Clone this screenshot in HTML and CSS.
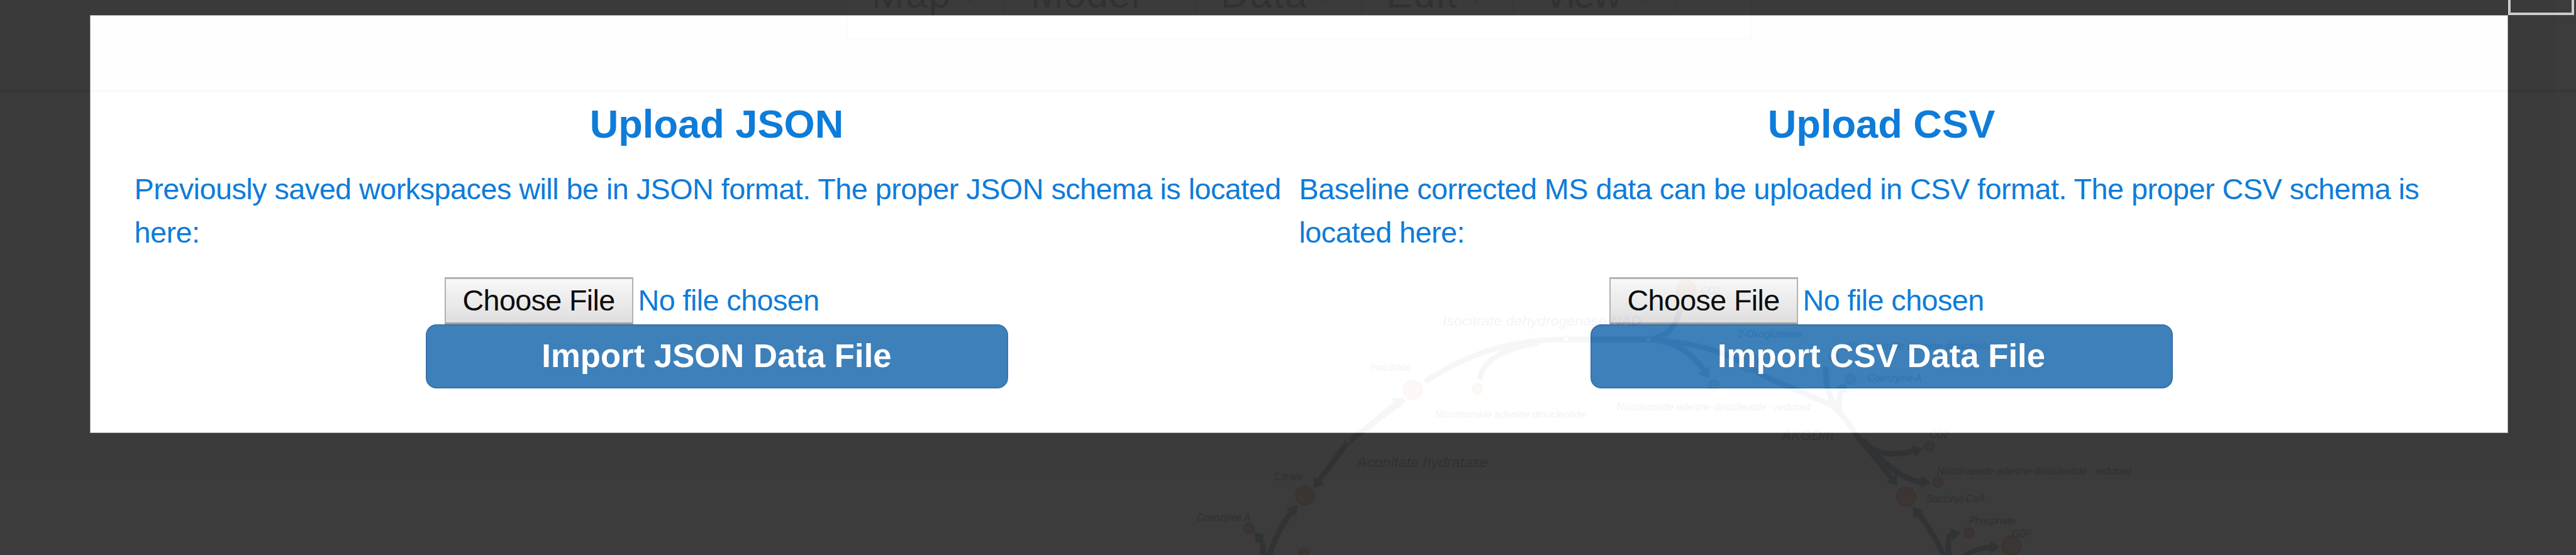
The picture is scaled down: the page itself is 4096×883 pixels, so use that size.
FILE: index.html
```html
<!DOCTYPE html>
<html lang="en">
<head>
<meta charset="utf-8">
<title>Upload</title>
<link rel="stylesheet" href="styles.css">
</head>
<body>
<svg class="map" viewBox="0 0 4664 1006" preserveAspectRatio="none">
  <defs>
    <marker id="arrow" markerUnits="userSpaceOnUse" markerWidth="18" markerHeight="24" refX="4" refY="12" orient="auto">
      <path class="head" d="M0 0L18 12L0 24Z"/>
    </marker>
  </defs>
  <rect class="navbar" x="0" y="0" width="4664" height="162"/>
  <rect class="rule" x="0" y="162" width="4664" height="5"/>
  <rect class="menu-box" x="1534" y="-20" width="1636" height="90"/>
  <path class="divider" d="M1820 0V27M2165 0V27M2465 0V27M2738 0V27M3037 0V27"/>
  <g class="menu">
    <text x="1578" y="14" textLength="143">Map</text>
    <text x="1866" y="14" textLength="198">Model</text>
    <text x="2210" y="14" textLength="156">Data</text>
    <text x="2510" y="14" textLength="128">Edit</text>
    <text x="2794" y="14" textLength="142">View</text>
    <path d="M1745-10h22l-11 13zM2089-10h22l-11 13zM2389-10h22l-11 13zM2661-10h22l-11 13zM2964-10h22l-11 13z"/>
  </g>
  <g class="edges">
    <path d="M2542 724L2468 781Q2444 796 2430 815L2386 874" marker-end="url(#arrow)"/>
    <path d="M2468 781L2530 730" marker-end="url(#arrow)"/>
    <path d="M2580 692C2650 645 2730 615 2835 615H2985C3080 622 3135 640 3190 680L3318 735Q3345 762 3360 787L3427 869" marker-end="url(#arrow)"/>
    <path d="M2679 688C2684 650 2730 630 2785 621"/>
    <path d="M2985 615C3020 612 3035 590 3042 560"/>
    <path d="M2990 615C3040 620 3070 648 3087 674" marker-end="url(#arrow)"/>
    <path d="M3306 665Q3303 705 3324 738"/>
    <path d="M3330 745Q3328 720 3336 705" marker-end="url(#arrow)"/>
    <path d="M3372 797Q3400 835 3468 817" marker-end="url(#arrow)"/>
    <path d="M3386 812Q3440 872 3482 874" marker-end="url(#arrow)"/>
    <path d="M3521 1010Q3500 965 3472 929" marker-end="url(#arrow)"/>
    <path d="M3529 1010C3526 980 3526 970 3537 968" marker-end="url(#arrow)"/>
    <path d="M3555 1010Q3575 993 3607 992" marker-end="url(#arrow)"/>
    <path d="M2297 1010Q2313 960 2340 926" marker-end="url(#arrow)"/>
    <path d="M2287 1010Q2289 985 2280 975" marker-end="url(#arrow)"/>
  </g>
  <g class="nodes">
    <circle cx="2558" cy="707" r="17"/><circle cx="2675" cy="705" r="9"/>
    <circle cx="3053" cy="525" r="17"/><circle cx="3167" cy="657" r="17"/>
    <circle cx="3103" cy="698" r="9"/><circle cx="3320" cy="647" r="9"/><circle cx="3351" cy="687" r="9"/>
    <circle cx="3493" cy="809" r="9"/><circle cx="3509" cy="874" r="9"/><circle cx="3451" cy="900" r="17"/>
    <circle cx="3565" cy="966" r="9"/><circle cx="3642" cy="989" r="17"/>
    <circle cx="2363" cy="898" r="17"/><circle cx="2261" cy="958" r="9"/><circle cx="2360" cy="1003" r="9"/>
    <circle class="mid" cx="2836" cy="615" r="5"/><circle class="mid" cx="2984" cy="615" r="5"/><circle class="mid" cx="2441" cy="799" r="5"/>
  </g>
  <g class="reactions">
    <text x="2612" y="590" textLength="360" lengthAdjust="spacingAndGlyphs">Isocitrate dehydrogenase NAD</text>
    <text x="2457" y="846" textLength="237" lengthAdjust="spacingAndGlyphs">Aconitate hydratase</text>
    <text x="3226" y="798" textLength="94" lengthAdjust="spacingAndGlyphs">AKGDm</text>
  </g>
  <g class="metabolites">
    <text x="2481" y="672" textLength="73" lengthAdjust="spacingAndGlyphs">Isocitrate</text>
    <text x="2598" y="758" textLength="272" lengthAdjust="spacingAndGlyphs">Nicotinamide adenine dinucleotide</text>
    <text x="2927" y="744" textLength="351" lengthAdjust="spacingAndGlyphs">Nicotinamide adenine dinucleotide - reduced</text>
    <text x="3080" y="533" textLength="34" lengthAdjust="spacingAndGlyphs">CO2</text>
    <text x="3146" y="612" textLength="117" lengthAdjust="spacingAndGlyphs">2-Oxoglutarate</text>
    <text x="3345" y="634" textLength="272" lengthAdjust="spacingAndGlyphs">Nicotinamide adenine dinucleotide</text>
    <text x="3382" y="692" textLength="97" lengthAdjust="spacingAndGlyphs">Coenzyme A</text>
    <text x="3494" y="794" textLength="34" lengthAdjust="spacingAndGlyphs">CO2</text>
    <text x="3507" y="860" textLength="351" lengthAdjust="spacingAndGlyphs">Nicotinamide adenine dinucleotide - reduced</text>
    <text x="3488" y="910" textLength="106" lengthAdjust="spacingAndGlyphs">Succinyl-CoA</text>
    <text x="3565" y="950" textLength="84" lengthAdjust="spacingAndGlyphs">Phosphate</text>
    <text x="3643" y="974" textLength="35" lengthAdjust="spacingAndGlyphs">GDP</text>
    <text x="2307" y="870" textLength="51" lengthAdjust="spacingAndGlyphs">Citrate</text>
    <text x="2167" y="944" textLength="97" lengthAdjust="spacingAndGlyphs">Coenzyme A</text>
  </g>
</svg>
<div class="overlay">
  <main class="modal">
    <section class="panel">
      <h2 class="title">Upload JSON</h2>
      <p class="hint">Previously saved workspaces will be in JSON format. The proper JSON schema is located here:</p>
      <div class="picker"><button class="choose">Choose File</button><span class="chosen">No file chosen</span></div>
      <button class="import">Import JSON Data File</button>
    </section>
    <section class="panel">
      <h2 class="title">Upload CSV</h2>
      <p class="hint">Baseline corrected MS data can be uploaded in CSV format. The proper CSV schema is located here:</p>
      <div class="picker"><button class="choose">Choose File</button><span class="chosen">No file chosen</span></div>
      <button class="import">Import CSV Data File</button>
    </section>
  </main>
</div>
<div class="close"></div>
</body>
</html>
```
FILE: styles.css
```css
* { box-sizing: border-box; }
html, body { margin: 0; width: 4096px; height: 883px; overflow: hidden; background: #fff; }
body { position: relative; font-family: "Liberation Sans", Arial, sans-serif; }

.map { position: absolute; top: 0; left: 0; width: 4096px; height: 883px; }
.navbar { fill: #f0f0f0; }
.rule { fill: #b0b0b0; }
.menu-box { fill: #fff; stroke: #d0d0d0; stroke-width: 4; }
.divider { stroke: #d0d0d0; stroke-width: 4; fill: none; }
.menu { font-size: 71px; fill: #1c4460; }
.edges { fill: none; stroke: #334e75; stroke-width: 10; }
.head { fill: #334e75; stroke: none; }
.nodes { fill: #e0865b; stroke: #a24510; stroke-width: 2; }
.nodes .mid { fill: #fff; stroke: #334e75; }
.reactions { font-size: 26px; font-style: italic; fill: #202078; }
.metabolites { font-size: 18px; font-style: italic; fill: #000; }

.overlay { position: absolute; top: 0; left: 0; width: 4096px; height: 883px; padding: 24px 108px 0 143px; background: #313131; opacity: .95; }
.modal { display: grid; grid-template-columns: 1852px 1852px; height: 665px; padding: 137px 0 0 69.5px; background: #fff; border: 1px solid #aaa; }
.panel { display: flex; flex-direction: column; align-items: center; color: #0275d8; }
.title { margin: 0 0 35px; font-size: 63.2px; line-height: 70px; }
.hint { align-self: stretch; margin: 0 0 37px; font-size: 46.8px; line-height: 68.5px; letter-spacing: -.54px; }
.picker { display: flex; align-items: center; width: 866px; height: 75px; gap: 8px; padding-bottom: 0; font-size: 46.8px; letter-spacing: -.6px; }
.choose { width: 300px; height: 75px; padding: 0 0 2px; border: 2px solid #adadad; border-top-width: 3px; border-bottom: 3px solid #999; background: linear-gradient(#f8f8f8, #ddd); color: #000; font: 46.8px "Liberation Sans", Arial, sans-serif; letter-spacing: -.7px; }
.chosen { padding-bottom: 2px; }
.import { width: 926px; height: 102px; padding: 0 0 4px; border: 2px solid #2e6da4; border-radius: 17px; background: #337ab7; color: #fff; font: bold 52.7px "Liberation Sans", Arial, sans-serif; }
.close { position: absolute; top: -70px; left: 3988px; width: 105px; height: 94px; border: 4px solid #ccc; }
```
